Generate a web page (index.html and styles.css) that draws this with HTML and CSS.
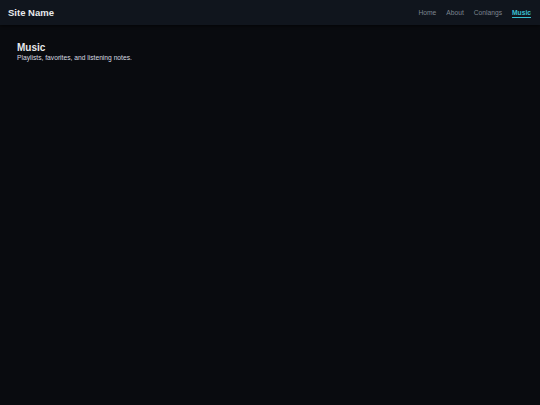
FILE: index.html
```html
<!DOCTYPE html>
<html lang="en">
<head>
<meta charset="utf-8">
<title>Music</title>
<link rel="stylesheet" href="styles.css">
</head>
<body>
<header class="site-header">
  <a class="brand" href="#">Site Name</a>
  <nav class="nav">
    <a href="#">Home</a>
    <a href="#">About</a>
    <a href="#">Conlangs</a>
    <a href="#" class="active">Music</a>
  </nav>
</header>
<main class="content">
  <h1 class="title">Music</h1>
  <p class="subtitle">Playlists, favorites, and listening notes.</p>
</main>
</body>
</html>
```
FILE: styles.css
```css
html, body {
  margin: 0;
  padding: 0;
  height: 100%;
}
body {
  background: #090b0f;
  color: #e6e8eb;
  font-family: "Liberation Sans", Arial, sans-serif;
}
.site-header {
  height: 25px;
  background: #10151d;
  display: flex;
  align-items: center;
  justify-content: space-between;
  padding: 0 9px 0 8px;
  box-shadow: 0 1px 3px rgba(0,0,0,0.6);
}
.brand {
  color: #e8eaed;
  font-weight: bold;
  font-size: 9.5px;
  text-decoration: none;
}
.nav {
  display: flex;
  gap: 10px;
  font-size: 6.7px;
}
.nav a {
  color: #7d8590;
  text-decoration: none;
}
.nav a.active {
  color: #39c0d2;
  font-weight: bold;
  text-decoration: underline;
  text-underline-offset: 2px;
}
.content {
  padding: 17px 17px;
}
.title {
  margin: 0;
  font-size: 10px;
  font-weight: bold;
  color: #e6e8eb;
}
.subtitle {
  margin: 1px 0 0;
  font-size: 6.7px;
  color: #d8dbe0;
}
```
